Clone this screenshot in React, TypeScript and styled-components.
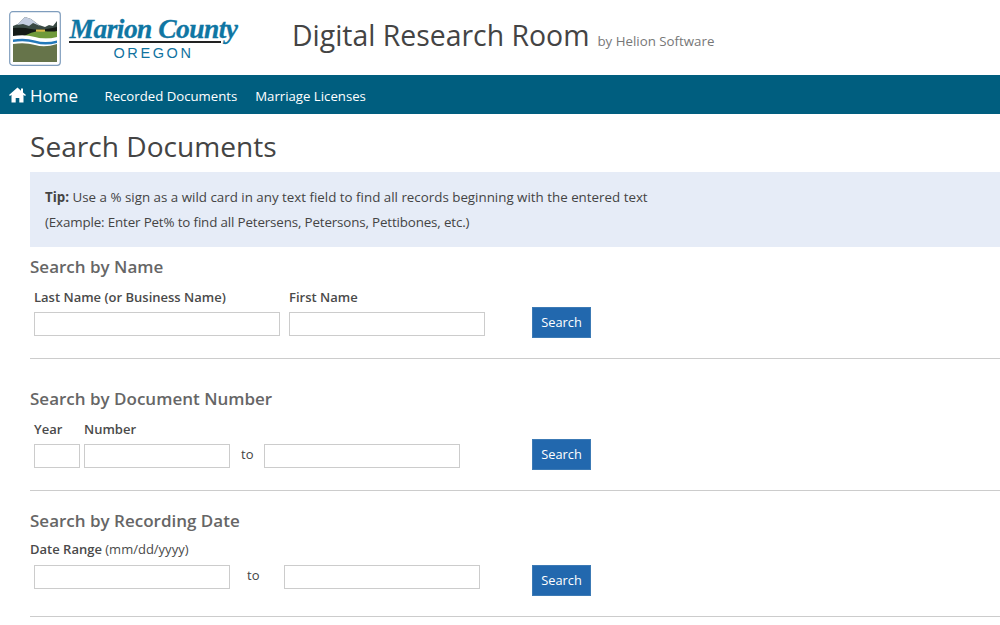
import React from "react";
import styled, { createGlobalStyle } from "styled-components";

const Global = createGlobalStyle`
  html, body { margin: 0; padding: 0; background: #fff; overflow: hidden; }
  body { font-family: "Open Sans", "Noto Sans", sans-serif; color: #333; }
`;
const Page = styled.div`width: 1000px; height: 625px; overflow: hidden;`;
const Header = styled.header`height: 75px; display: flex; align-items: flex-start;`;
const LogoBlock = styled.div`display: flex; width: 292px; padding: 11px 0 0 9px; box-sizing: border-box; gap: 8px;`;
const Seal = styled.svg`width: 52px; height: 55px; flex: none;`;
const Wordmark = styled.div`display: flex; flex-direction: column; align-items: center; width: 169px; margin-top: 5px;`;
const County = styled.div`
  font-family: "Liberation Serif", serif; font-style: italic; font-weight: 700; font-size: 27.5px; letter-spacing: -0.55px;
  line-height: 25px; color: #0f76a3; white-space: nowrap; -webkit-text-stroke: 0.3px #0f76a3;
`;
const Rule = styled.div`width: 152px; height: 2px; background: #222; align-self: flex-start;`;
const Oregon = styled.div`font-family: "Liberation Sans", sans-serif; font-size: 14.5px; letter-spacing: 2.6px; line-height: 18px; color: #11739f; margin-top: 1px;`;
const Titles = styled.div`display: flex; align-items: baseline; gap: 8px; padding-top: 16px;`;
const AppTitle = styled.div`font-size: 28.4px; line-height: 38px; color: #444;`;
const ByLine = styled.div`font-size: 13.3px; color: #777;`;
const Nav = styled.nav`height: 39px; background: #005e7f; display: flex; align-items: center; color: #fff; padding: 2px 0 0 9px; box-sizing: border-box;`;
const HomeLink = styled.a`display: flex; align-items: center; gap: 4px; font-size: 17px; width: 95.5px; margin-top: -1px;`;
const NavLink = styled.a`font-size: 13.2px; margin-right: 18px; white-space: nowrap;`;
const Main = styled.main`padding: 0 0 0 30px;`;
const PageTitle = styled.h1`margin: 0; font-weight: 400; font-size: 28.1px; line-height: 40px; padding-top: 12px; height: 58px; box-sizing: border-box; color: #444;`;
const Tip = styled.div`height: 75px; box-sizing: border-box; background: #e6ecf7; padding: 13px 15px; font-size: 13.35px; line-height: 25px; color: #444;`;
const TipExample = styled.span`letter-spacing: -0.14px;`;
const Section = styled.section<{ $h: number }>`
  height: ${p => p.$h}px; box-sizing: border-box; border-bottom: 1px solid #ccc;
`;
const Heading = styled.h2<{ $top: number }>`margin: 0; padding-top: ${p => p.$top}px; font-size: 17px; line-height: 22px; font-weight: 600; color: #666;`;
const Row = styled.div<{ $top: number }>`display: flex; align-items: flex-start; margin-top: ${p => p.$top}px; padding-left: 4px;`;
const Fields = styled.div`display: flex; width: 498px; flex: none;`;
const Field = styled.div<{ $w: number; $mr?: number }>`width: ${p => p.$w}px; margin-right: ${p => p.$mr ?? 0}px; flex: none;`;
const Label = styled.label`display: block; font-size: 13px; line-height: 17px; font-weight: 600; letter-spacing: 0; color: #4a4a4a; height: 23px; white-space: nowrap;`;
const SoloLabel = styled.div`font-size: 13px; line-height: 17px; font-weight: 600; color: #4a4a4a; margin-top: 9px; height: 24px;`;
const LightSpan = styled.span`font-weight: 400;`;
const Input = styled.input`
  display: block; box-sizing: border-box; width: 100%; height: 24px; border: 1px solid #ccc; padding: 0; margin: 0; background: #fff;
`;
const To = styled.span<{ $w: number; $top?: number; $indent?: number }>`
  width: ${p => p.$w}px; flex: none; box-sizing: border-box; padding: ${p => p.$top ?? 0}px 0 0 ${p => p.$indent ?? 11}px; font-size: 13px; line-height: 20px; color: #444;
`;
const Button = styled.button<{ $top?: number }>`
  width: 59px; height: 31px; flex: none; margin-top: ${p => p.$top ?? 18}px; background: #2268ae; border: 1px solid #3c7ab5; color: #fff; font: 400 12.8px/26px "Open Sans", sans-serif; padding: 0 0 2px;
`;

const House = () => (
  <svg width="17" height="16" viewBox="0 0 17 15" fill="#fff"><path d="M8.5 0 0 7.5l1 1L2.5 7.3V15h4.2v-4.5h3.6V15h4.2V7.3L16 8.5l1-1-3-2.6V1h-2v2.2z" /></svg>
);

export default function App() {
  return (
    <Page>
      <Global />
      <Header>
        <LogoBlock>
          <Seal viewBox="0 0 52 55">
            <rect x="0.7" y="0.7" width="50.6" height="53.6" rx="3" fill="#fff" stroke="#7f9dbd" strokeWidth="1.2" />
            <path d="M4 19V15l5-2 7-7 6 2 8 6 6 2 4-2 4 1 4-5v9z" fill="#3a4a44" />
            <path d="M8 14 16 6l6 2 9 7-7-3-4 3-6-2z" fill="#c3cde0" />
            <path d="M4 25V17q10-1 18 1t26-2v9z" fill="#141a16" />
            <path d="M12 27Q24 19 34 20t14 0v8z" fill="#6f9a3b" />
            <rect x="27" y="18.5" width="9" height="2.2" fill="#d6b84a" />
            <path d="M4 25q12-2 22 1t22 0v6q-12 3-22 0t-22-1z" fill="#fff" />
            <path d="M4 28.500q12-2 22 1t22 0v2.500q-12 3-22 0t-22-1z" fill="#2379ba" />
            <path d="M4 33q12-2 22 1t22-1v18H4z" fill="#66744a" />
          </Seal>
          <Wordmark>
            <County>Marion County</County>
            <Rule />
            <Oregon>OREGON</Oregon>
          </Wordmark>
        </LogoBlock>
        <Titles>
          <AppTitle>Digital Research Room</AppTitle>
          <ByLine>by Helion Software</ByLine>
        </Titles>
      </Header>
      <Nav>
        <HomeLink><House />Home</HomeLink>
        <NavLink>Recorded Documents</NavLink>
        <NavLink>Marriage Licenses</NavLink>
      </Nav>
      <Main>
        <PageTitle>Search Documents</PageTitle>
        <Tip>
          <b>Tip:</b> Use a % sign as a wild card in any text field to find all records beginning with the entered text<br />
          <TipExample>(Example: Enter Pet% to find all Petersens, Petersons, Pettibones, etc.)</TipExample>
        </Tip>
        <Section $h={112}>
          <Heading $top={9}>Search by Name</Heading>
          <Row $top={11}>
            <Fields>
              <Field $w={246} $mr={9}><Label>Last Name (or Business Name)</Label><Input /></Field>
              <Field $w={196}><Label>First Name</Label><Input /></Field>
            </Fields>
            <Button>Search</Button>
          </Row>
        </Section>
        <Section $h={132}>
          <Heading $top={29}>Search by Document Number</Heading>
          <Row $top={11}>
            <Fields>
              <Field $w={46} $mr={4}><Label>Year</Label><Input /></Field>
              <Field $w={146}><Label>Number</Label><Input /></Field>
              <To $w={34} $top={23}>to</To>
              <Field $w={196}><Label>&nbsp;</Label><Input /></Field>
            </Fields>
            <Button>Search</Button>
          </Row>
        </Section>
        <Section $h={126}>
          <Heading $top={19}>Search by Recording Date</Heading>
          <SoloLabel>Date Range <LightSpan>(mm/dd/yyyy)</LightSpan></SoloLabel>
          <Row $top={0}>
            <Fields>
              <Field $w={196}><Input /></Field>
              <To $w={54} $indent={17}>to</To>
              <Field $w={196}><Input /></Field>
            </Fields>
            <Button $top={0}>Search</Button>
          </Row>
        </Section>
      </Main>
    </Page>
  );
}
